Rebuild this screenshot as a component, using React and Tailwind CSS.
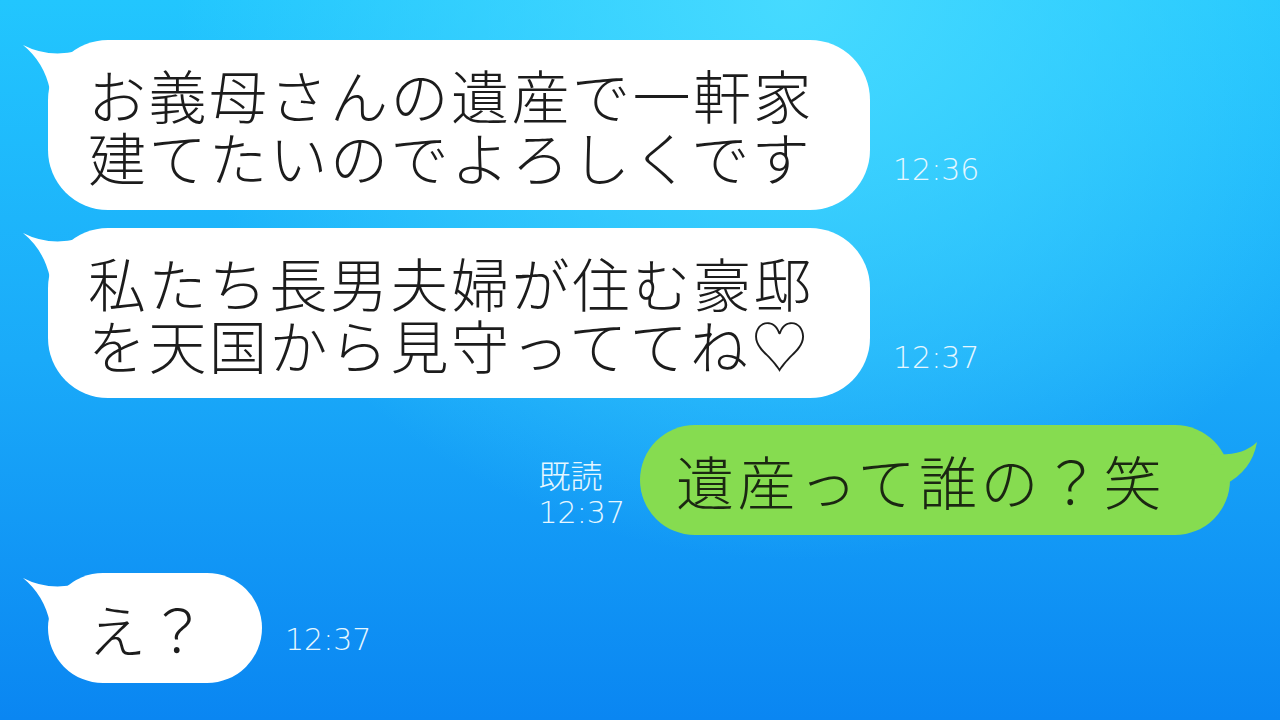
const JP = "font-['Noto_Sans_CJK_JP','Noto_Sans',sans-serif]";
const TIME = "font-['DejaVu_Sans','Liberation_Sans',sans-serif] font-extralight text-[30px] leading-none text-[#e6f7ff]";

const LeftTail = () => (
    <svg
        className="absolute -left-[28px] top-0"
        width="70"
        height="52"
        viewBox="0 0 70 52"
    >
        <path d="M3 5 Q 28 18 58 11 L 62 48 L 30 50 Q 24 22 3 5 Z" fill="#ffffff" />
    </svg>
);

const RightTail = () => (
    <svg
        className="absolute -right-[30px] top-[10px]"
        width="50"
        height="60"
        viewBox="0 0 50 60"
    >
        <path d="M0 19 Q 32 22 47 7 Q 42 36 14 50 L 0 50 Z" fill="#86dc50" />
    </svg>
);

const WhiteBubble = ({ lines, className }) => (
    <div className={`relative bg-white flex flex-col justify-center pl-[40px] ${className}`}>
        <LeftTail />
        <div className={`relative ${JP} font-light text-[58px] leading-[62px] tracking-[2.5px] text-[#1c1c1c] whitespace-nowrap`}>
            {lines.map((line, i) => (
                <span key={i}>
                    {i > 0 && <br />}
                    {line}
                </span>
            ))}
        </div>
    </div>
);

const Time = ({ children, className }) => (
    <div className={`${TIME} ${className}`}>{children}</div>
);

export default function App() {
    return (
        <div className="w-full h-[720px] overflow-hidden bg-[radial-gradient(ellipse_at_62%_0%,#46daff_0%,rgba(70,218,255,0)_55%),linear-gradient(180deg,#22c6fe_0%,#1aaaf9_50%,#0a86f2_100%)]">
            <div className="flex flex-col pt-[40px] pl-[48px] pr-[50px]">
                {/* incoming 1 */}
                <div className="flex items-end">
                    <WhiteBubble
                        className="w-[822px] h-[170px] rounded-[60px]"
                        lines={["お義母さんの遺産で一軒家", "建てたいのでよろしくです"]}
                    />
                    <Time className="ml-[23px] mb-[25px]">12:36</Time>
                </div>

                {/* incoming 2 */}
                <div className="flex items-end mt-[18px]">
                    <WhiteBubble
                        className="w-[822px] h-[170px] rounded-[60px]"
                        lines={["私たち長男夫婦が住む豪邸", "を天国から見守っててね♡"]}
                    />
                    <Time className="ml-[23px] mb-[25px]">12:37</Time>
                </div>

                {/* outgoing */}
                <div className="flex items-end justify-end mt-[27px]">
                    <div className="flex flex-col gap-[8px] mr-[15px] mb-[7px]">
                        <div className={`${JP} font-light text-[32px] leading-none text-[#e6f7ff]`}>既読</div>
                        <Time>12:37</Time>
                    </div>
                    <div className="relative w-[590px] h-[110px] rounded-full bg-[#86dc50] flex items-center pl-[36px]">
                        <RightTail />
                        <div className={`${JP} font-light text-[58px] leading-none tracking-[3.5px] text-[#1b2712] whitespace-nowrap`}>
                            遺産って誰の？笑
                        </div>
                    </div>
                </div>

                {/* incoming 3 */}
                <div className="flex items-end mt-[38px]">
                    <WhiteBubble
                        className="w-[214px] h-[110px] rounded-full"
                        lines={["え？"]}
                    />
                    <Time className="ml-[23px] mb-[28px]">12:37</Time>
                </div>
            </div>
        </div>
    );
}
